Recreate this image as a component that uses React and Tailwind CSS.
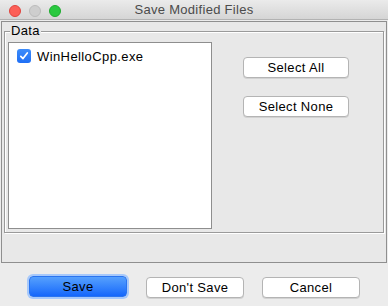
import React from "react";

const font = { fontFamily: '"Liberation Sans", Arial, sans-serif' };

function WhiteButton({ children, className = "" }) {
  return (
    <div
      className={`flex items-center justify-center bg-white border border-[#b4b4b4] rounded-[4px] shadow-[0_1px_0_#d2d2d2] text-[13px] tracking-[0.35px] text-black leading-none ${className}`}
    >
      {children}
    </div>
  );
}

export default function App() {
  return (
    <div className="w-[388px] h-[306px] bg-[#ececec] flex flex-col overflow-hidden" style={font}>
      {/* Title bar */}
      <div className="relative h-[20px] shrink-0 bg-gradient-to-b from-[#ebebeb] to-[#d5d5d5] border-b border-[#b2b2b2] flex items-center justify-center">
        <div className="absolute left-[9px] top-[5px] flex gap-[8px]">
          <div className="w-[12px] h-[12px] rounded-full bg-[#fc5f57] border border-[#e0443e]" />
          <div className="w-[12px] h-[12px] rounded-full bg-[#cecece] border border-[#bcbcbc]" />
          <div className="w-[12px] h-[12px] rounded-full bg-[#2ac940] border border-[#1eac2f]" />
        </div>
        <span className="text-[13px] text-[#4b4b4b] leading-none tracking-[0.3px]">Save Modified Files</span>
      </div>

      {/* Outer panel */}
      <div className="mt-[1px] ml-[1px] w-[386px] h-[242px] shrink-0 border border-[#8f8f8f] bg-[#e8e8e8] pt-[9px] pl-[2px]">
        {/* Group box */}
        <div className="relative w-[380px] h-[202px] border border-[#9a9a9a] shadow-[1px_1px_0_#ffffff,inset_1px_1px_0_#ffffff] pt-[10px] pl-[3px] flex">
          <span className="absolute left-[5px] top-[-9px] px-[1px] bg-[#e8e8e8] text-[13px] leading-[16px] text-black tracking-[0.3px]">
            Data
          </span>
          {/* List */}
          <div className="w-[204px] h-[187px] bg-white border border-[#8e8e8e] pt-[6px] pl-[8px]">
            <div className="flex items-center gap-[6px]">
              <div className="w-[14px] h-[14px] rounded-[3px] bg-gradient-to-b from-[#3d8cfa] to-[#1f6ff5] flex items-center justify-center">
                <svg width="10" height="10" viewBox="0 0 10 10">
                  <path d="M1.8 5.3 L4 7.6 L8.3 2" fill="none" stroke="white" strokeWidth="1.7" strokeLinecap="round" strokeLinejoin="round" />
                </svg>
              </div>
              <span className="text-[13px] leading-none text-black tracking-[0.4px]">WinHelloCpp.exe</span>
            </div>
          </div>
          {/* Side buttons */}
          <div className="ml-[31px] pt-[15px] flex flex-col gap-[18px]">
            <WhiteButton className="w-[106px] h-[21px]">Select All</WhiteButton>
            <WhiteButton className="w-[106px] h-[21px]">Select None</WhiteButton>
          </div>
        </div>
      </div>

      {/* Bottom buttons */}
      <div className="flex items-start pl-[29px] pt-[13px]">
        <div className="w-[98px] h-[21px] rounded-[4px] bg-gradient-to-b from-[#56a0fd] to-[#1466fb] border border-[#2a74f0] shadow-[0_0_0_2px_#a7c9fb] flex items-center justify-center text-[13px] tracking-[0.35px] text-black leading-none">
          Save
        </div>
        <WhiteButton className="ml-[19px] mt-[1px] w-[98px] h-[21px]">Don't Save</WhiteButton>
        <WhiteButton className="ml-[18px] mt-[1px] w-[98px] h-[21px]">Cancel</WhiteButton>
      </div>
    </div>
  );
}
